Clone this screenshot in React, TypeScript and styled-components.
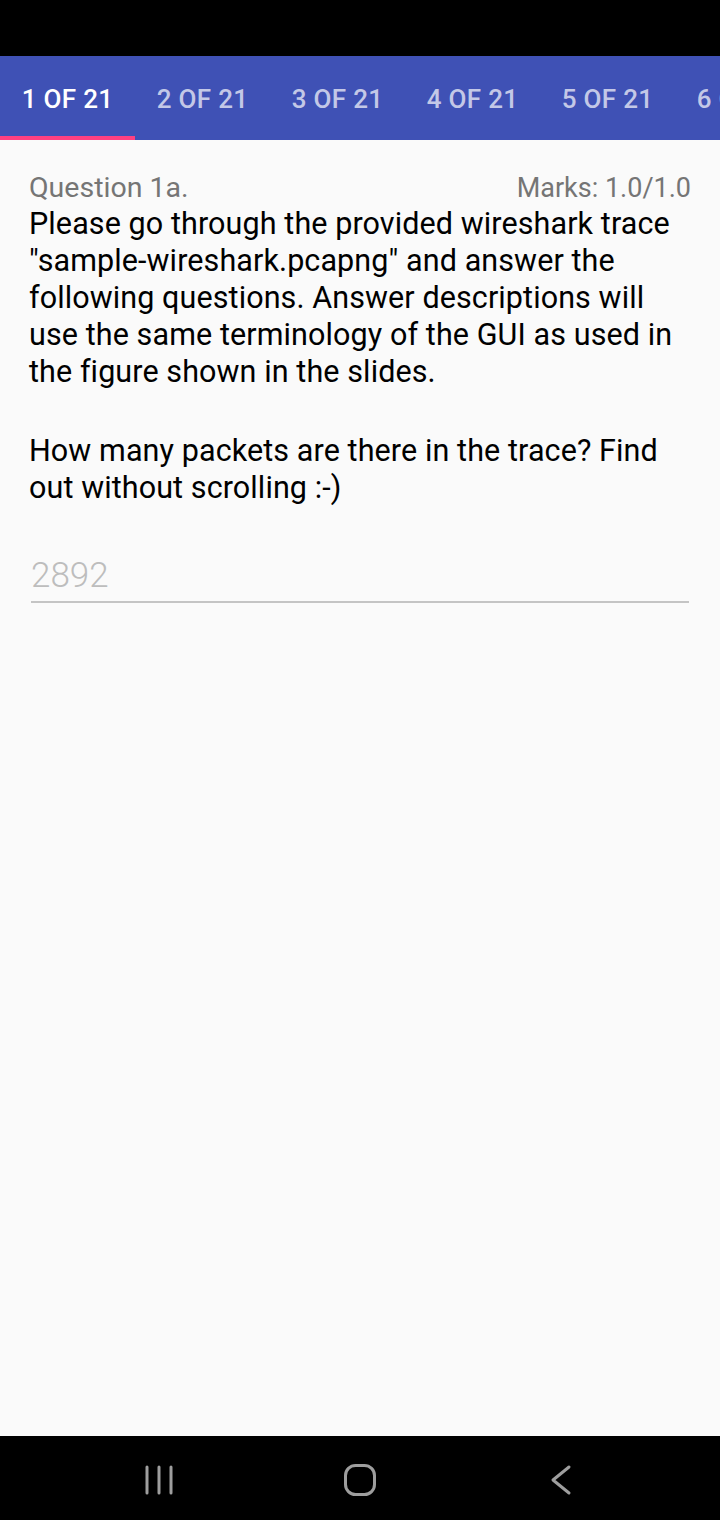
import React from "react";
import styled, { createGlobalStyle } from "styled-components";

const Global = createGlobalStyle`
  html, body { margin: 0; padding: 0; }
  body { font-family: Roboto, "Noto Sans", sans-serif; background: #fafafa; }
  #root { width: 720px; height: 1520px; }
`;

const Screen = styled.div`
  width: 720px;
  height: 1520px;
  display: flex;
  flex-direction: column;
  background: #fafafa;
  overflow: hidden;
`;

const StatusBar = styled.div`
  height: 56px;
  background: #000;
  flex: none;
`;

const TabBar = styled.div`
  height: 84px;
  background: #3f51b5;
  display: flex;
  flex: none;
  overflow: hidden;
`;

const Tab = styled.div<{ $active?: boolean }>`
  position: relative;
  flex: none;
  width: 135px;
  display: flex;
  align-items: center;
  justify-content: center;
  padding-top: 2px;
  box-sizing: border-box;
  font-family: Roboto, sans-serif;
  font-weight: 500;
  font-size: 26px;
  letter-spacing: 0.3px;
  color: ${(p) => (p.$active ? "#ffffff" : "rgba(255,255,255,0.7)")};
  white-space: nowrap;
  &::after {
    content: "";
    position: absolute;
    left: 0;
    right: 0;
    bottom: 0;
    height: 4px;
    background: ${(p) => (p.$active ? "#ff4081" : "transparent")};
  }
`;

const Content = styled.div`
  flex: 1;
  padding: 31px 29px 0 29px;
  display: flex;
  flex-direction: column;
`;

const HeaderRow = styled.div`
  display: flex;
  justify-content: space-between;
  align-items: baseline;
  height: 34px;
`;

const QuestionLabel = styled.span`
  font-size: 28.5px;
  color: #757575;
`;

const Marks = styled.span`
  font-size: 27px;
  color: #757575;
`;

const Body = styled.p`
  margin: 0;
  font-size: 30.5px;
  letter-spacing: 0.1px;
  line-height: 37px;
  color: #000;
`;

const Gap = styled.div`
  height: 42px;
`;

const InputWrap = styled.div`
  margin: 50px 2px 0 2px;
  border-bottom: 2px solid #c4c4c4;
  padding-bottom: 5px;
`;

const InputText = styled.div`
  font-size: 35px;
  font-weight: 300;
  color: #bdbdbd;
  line-height: 40px;
`;

const NavBar = styled.div`
  height: 84px;
  box-sizing: border-box;
  padding-top: 4px;
  background: #000;
  flex: none;
  display: flex;
  align-items: center;
  justify-content: center;
  gap: 161px;
`;

const NavIcon = styled.svg`
  width: 40px;
  height: 40px;
  flex: none;
`;

export default function App() {
  const tabs = ["1 OF 21", "2 OF 21", "3 OF 21", "4 OF 21", "5 OF 21", "6 OF 21"];
  return (
    <>
      <Global />
      <Screen>
        <StatusBar />
        <TabBar>
          {tabs.map((t, i) => (
            <Tab key={t} $active={i === 0}>
              {t}
            </Tab>
          ))}
        </TabBar>
        <Content>
          <HeaderRow>
            <QuestionLabel>Question 1a.</QuestionLabel>
            <Marks>Marks: 1.0/1.0</Marks>
          </HeaderRow>
          <Body>
            Please go through the provided wireshark trace "sample-wireshark.pcapng" and answer the
            following questions. Answer descriptions will use the same terminology of the GUI as
            used in the figure shown in the slides.
          </Body>
          <Gap />
          <Body>How many packets are there in the trace? Find out without scrolling :-)</Body>
          <InputWrap>
            <InputText>2892</InputText>
          </InputWrap>
        </Content>
        <NavBar>
          <NavIcon viewBox="0 0 40 40">
            <g stroke="#9e9e9e" strokeWidth="3" strokeLinecap="round">
              <line x1="8" y1="7" x2="8" y2="33" />
              <line x1="20" y1="7" x2="20" y2="33" />
              <line x1="32" y1="7" x2="32" y2="33" />
            </g>
          </NavIcon>
          <NavIcon viewBox="0 0 40 40">
            <rect x="5.5" y="5.5" width="29" height="29" rx="10" fill="none" stroke="#9e9e9e" strokeWidth="3" />
          </NavIcon>
          <NavIcon viewBox="0 0 40 40">
            <polyline points="28,7 12,20 28,33" fill="none" stroke="#9e9e9e" strokeWidth="3" strokeLinecap="round" strokeLinejoin="round" />
          </NavIcon>
        </NavBar>
      </Screen>
    </>
  );
}
